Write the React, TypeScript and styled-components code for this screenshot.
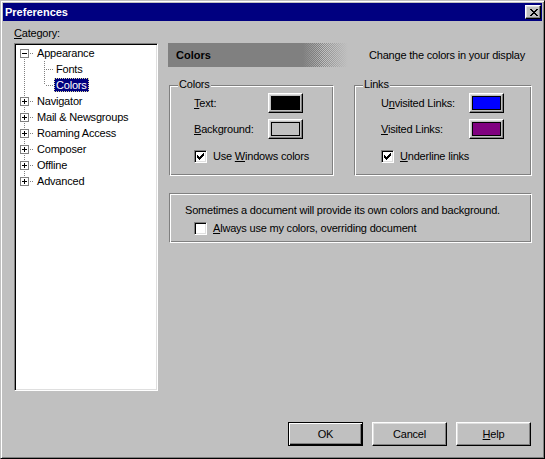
import React from "react";
import styled, { createGlobalStyle, css } from "styled-components";

const GlobalStyle = createGlobalStyle`
  html, body { margin: 0; padding: 0; background: #c0c0c0; }
  body {
    font-family: "Liberation Sans", Arial, sans-serif;
    font-size: 11px;
    letter-spacing: -0.2px;
    color: #000;
  }
  * { box-sizing: border-box; }
  u { text-decoration-thickness: 1px; text-underline-offset: 1px; }
`;

/* ---------- pixel glyph helper (icons) ---------- */
const gridPath = (rows: string[]) =>
  rows
    .map((r, y) => {
      let d = "";
      let x = 0;
      while (x < r.length) {
        if (r[x] === "#") {
          const s = x;
          while (x < r.length && r[x] === "#") x++;
          d += `M${s} ${y}h${x - s}v1h${-(x - s)}z`;
        } else x++;
      }
      return d;
    })
    .join("");

const CHECK = ["......#", ".....##", "#...###", "##.###.", "#####..", ".###...", "..#...."];
const CLOSE_X = ["##....##", ".##..##.", "..####..", "...##...", "..####..", ".##..##.", "##....##"];

const PixelGlyph: React.FC<{ rows: string[] }> = ({ rows }) => (
  <svg width={rows[0].length} height={rows.length} shapeRendering="crispEdges" style={{ display: "block" }}>
    <path d={gridPath(rows)} fill="#000" />
  </svg>
);

/* ---------- window chrome ---------- */
const Window = styled.div`
  width: 545px;
  height: 459px;
  background: #c0c0c0;
  border: 1px solid;
  border-color: #c0c0c0 #000 #000 #c0c0c0;
  box-shadow: inset 1px 1px #fff, inset -1px -1px #808080;
  padding: 2px;
  display: flex;
  flex-direction: column;
`;

const TitleBar = styled.div`
  height: 18px;
  background: #000080;
  display: flex;
  align-items: center;
  justify-content: space-between;
  padding: 0 1px 0 2px;
`;

const TitleText = styled.span`
  color: #fff;
  font-weight: bold;
  font-size: 11px;
  letter-spacing: 0;
`;

const CloseButton = styled.div`
  width: 16px;
  height: 14px;
  background: #c0c0c0;
  border: 1px solid;
  border-color: #fff #000 #000 #fff;
  box-shadow: inset -1px -1px #808080, inset 1px 1px #dfdfdf;
  display: flex;
  align-items: center;
  justify-content: center;
  padding-left: 1px;
`;

const Body = styled.div`
  flex: 1;
  display: flex;
  flex-direction: column;
  padding: 5px 10px 0 11px;
`;

const Main = styled.div`
  display: flex;
  gap: 10px;
`;

const LeftCol = styled.div`
  width: 144px;
  display: flex;
  flex-direction: column;
`;

const FieldLabel = styled.div`
  height: 14px;
  line-height: 14px;
  margin-bottom: 3px;
`;

/* ---------- tree ---------- */
const TreeBox = styled.div`
  height: 348px;
  background: #fff;
  border: 1px solid;
  border-color: #808080 #fff #fff #808080;
  box-shadow: inset 1px 1px #000, inset -1px -1px #dfdfdf;
  padding: 1px;
`;

const TreeRow = styled.div`
  height: 16px;
  display: flex;
  align-items: center;
`;

const TreeLabel = styled.span<{ $selected?: boolean }>`
  height: 14px;
  line-height: 14px;
  padding: 0 2px;
  white-space: nowrap;
  ${(p) =>
    p.$selected &&
    css`
      background: #000080;
      color: #fff;
      outline: 1px dotted #e0e0a0;
      outline-offset: -1px;
    `}
`;

type Node = {
  label: string;
  level: 0 | 1;
  box?: "minus" | "plus";
  up?: boolean;
  down?: boolean;
  through?: boolean;
  selected?: boolean;
};

const NODES: Node[] = [
  { label: "Appearance", level: 0, box: "minus", down: true },
  { label: "Fonts", level: 1, up: true, down: true, through: true },
  { label: "Colors", level: 1, up: true, through: true, selected: true },
  { label: "Navigator", level: 0, box: "plus", up: true, down: true },
  { label: "Mail & Newsgroups", level: 0, box: "plus", up: true, down: true },
  { label: "Roaming Access", level: 0, box: "plus", up: true, down: true },
  { label: "Composer", level: 0, box: "plus", up: true, down: true },
  { label: "Offline", level: 0, box: "plus", up: true, down: true },
  { label: "Advanced", level: 0, box: "plus", up: true },
];

const Gutter: React.FC<{ node: Node }> = ({ node }) => {
  const w = 19 + 19 * node.level;
  const lx = 8 + 20 * node.level + 0.5;
  const dash = { stroke: "#808080", strokeWidth: 1, strokeDasharray: "1 1" };
  return (
    <svg width={w} height={16} shapeRendering="crispEdges" style={{ display: "block", flex: "none" }}>
      {node.through && <line x1={8.5} y1={0} x2={8.5} y2={16} {...dash} />}
      {node.up && <line x1={lx} y1={0} x2={lx} y2={8} {...dash} />}
      {node.down && <line x1={lx} y1={8} x2={lx} y2={16} {...dash} />}
      <line x1={lx + 1} y1={8.5} x2={w - 1} y2={8.5} {...dash} />
      {node.box && (
        <g>
          <rect x={4.5} y={4.5} width={8} height={8} fill="#fff" stroke="#808080" />
          <line x1={6} y1={8.5} x2={11} y2={8.5} stroke="#000" />
          {node.box === "plus" && <line x1={8.5} y1={6} x2={8.5} y2={11} stroke="#000" />}
        </g>
      )}
    </svg>
  );
};

/* ---------- right panel ---------- */
const RightCol = styled.div`
  flex: 1;
  padding-top: 17px;
  display: flex;
  flex-direction: column;
`;

const PanelHeader = styled.div`
  height: 24px;
  display: flex;
  align-items: center;
`;

const HeaderBar = styled.div`
  width: 180px;
  height: 24px;
  display: flex;
`;

const HeaderTitle = styled.div`
  width: 135px;
  background: #808080;
  font-weight: bold;
  letter-spacing: 0;
  line-height: 24px;
  padding-left: 8px;
`;

const HeaderFade = styled.div`
  flex: 1;
  background:
    linear-gradient(to right, #808080, rgba(128, 128, 128, 0) 45%),
    repeating-conic-gradient(#808080 0% 25%, transparent 0% 50%) 0 0 / 2px 2px;
  -webkit-mask-image: linear-gradient(to right, #000 35%, transparent);
  mask-image: linear-gradient(to right, #000 35%, transparent);
`;

const HeaderNote = styled.div`
  margin-left: 21px;
  white-space: nowrap;
`;

const GroupRow = styled.div`
  display: flex;
  gap: 20px;
  margin: 18px 0 0 1px;
`;

const GroupBox = styled.div<{ $width: number; $height: number }>`
  position: relative;
  width: ${(p) => p.$width}px;
  height: ${(p) => p.$height}px;
  border: 1px solid;
  border-color: #808080 #fff #fff #808080;
  box-shadow: inset 1px 1px #fff, inset -1px -1px #808080;
`;

const Legend = styled.span`
  position: absolute;
  top: -8px;
  left: 8px;
  padding: 0 1px;
  line-height: 13px;
  background: #c0c0c0;
`;

const GroupGrid = styled.div<{ $pad: number; $labelWidth: number }>`
  display: grid;
  grid-template-columns: ${(p) => p.$labelWidth}px 35px;
  row-gap: 6px;
  align-items: center;
  padding: 7px 0 0 ${(p) => p.$pad}px;
`;

const RowLabel = styled.span`
  white-space: nowrap;
`;

const ColorButton = styled.div`
  width: 35px;
  height: 20px;
  background: #c0c0c0;
  border: 1px solid;
  border-color: #fff #000 #000 #fff;
  box-shadow: inset -1px -1px #808080, inset 1px 1px #dfdfdf;
  display: flex;
  align-items: center;
  justify-content: center;
`;

const Swatch = styled.div<{ $color: string }>`
  width: 29px;
  height: 14px;
  border: 1px solid #000;
  background: ${(p) => p.$color};
  margin: -1px 0 0 -1px;
`;

const CheckRow = styled.label<{ $span?: boolean; $indent?: number }>`
  display: flex;
  align-items: center;
  gap: 6px;
  height: 16px;
  white-space: nowrap;
  ${(p) => p.$span && css`grid-column: 1 / -1; margin-top: 3px;`}
  ${(p) => p.$indent !== undefined && css`margin-left: ${p.$indent}px;`}
`;

const CheckBox = styled.span`
  width: 13px;
  height: 13px;
  flex: none;
  background: #fff;
  border: 1px solid;
  border-color: #808080 #fff #fff #808080;
  box-shadow: inset 1px 1px #000, inset -1px -1px #dfdfdf;
  display: flex;
  align-items: center;
  justify-content: center;
`;

const WideBox = styled(GroupBox)`
  margin: 17px 0 0 1px;
  padding: 9px 0 0 15px;
`;

const Note = styled.div`
  line-height: 14px;
  white-space: nowrap;
  margin-bottom: 3px;
`;

/* ---------- footer ---------- */
const Footer = styled.div`
  display: flex;
  justify-content: flex-end;
  gap: 9px;
  margin-top: 31px;
  padding-right: 1px;
`;

const PushButton = styled.button<{ $default?: boolean }>`
  width: 75px;
  height: 24px;
  padding: 0;
  font: inherit;
  letter-spacing: inherit;
  color: #000;
  background: #c0c0c0;
  border: 1px solid;
  ${(p) =>
    p.$default
      ? css`
          border-color: #000;
          box-shadow: inset 1px 1px #fff, inset -1px -1px #000, inset -2px -2px #808080;
        `
      : css`
          border-color: #fff #000 #000 #fff;
          box-shadow: inset -1px -1px #808080, inset 1px 1px #dfdfdf;
        `}
`;

const Check: React.FC<{ checked?: boolean }> = ({ checked }) => (
  <CheckBox>{checked && <PixelGlyph rows={CHECK} />}</CheckBox>
);

export default function App() {
  return (
    <>
      <GlobalStyle />
      <Window>
        <TitleBar>
          <TitleText>Preferences</TitleText>
          <CloseButton aria-label="Close">
            <PixelGlyph rows={CLOSE_X} />
          </CloseButton>
        </TitleBar>
        <Body>
          <Main>
            <LeftCol>
              <FieldLabel>
                <u>C</u>ategory:
              </FieldLabel>
              <TreeBox>
                {NODES.map((n) => (
                  <TreeRow key={n.label}>
                    <Gutter node={n} />
                    <TreeLabel $selected={n.selected}>{n.label}</TreeLabel>
                  </TreeRow>
                ))}
              </TreeBox>
            </LeftCol>
            <RightCol>
              <PanelHeader>
                <HeaderBar>
                  <HeaderTitle>Colors</HeaderTitle>
                  <HeaderFade />
                </HeaderBar>
                <HeaderNote>Change the colors in your display</HeaderNote>
              </PanelHeader>
              <GroupRow>
                <GroupBox $width={165} $height={91}>
                  <Legend>Colors</Legend>
                  <GroupGrid $pad={24} $labelWidth={74}>
                    <RowLabel>
                      <u>T</u>ext:
                    </RowLabel>
                    <ColorButton>
                      <Swatch $color="#000" />
                    </ColorButton>
                    <RowLabel>
                      <u>B</u>ackground:
                    </RowLabel>
                    <ColorButton>
                      <Swatch $color="#c0c0c0" />
                    </ColorButton>
                    <CheckRow $span>
                      <Check checked />
                      <span>
                        Use <u>W</u>indows colors
                      </span>
                    </CheckRow>
                  </GroupGrid>
                </GroupBox>
                <GroupBox $width={178} $height={91}>
                  <Legend>Links</Legend>
                  <GroupGrid $pad={26} $labelWidth={88}>
                    <RowLabel>
                      U<u>n</u>visited Links:
                    </RowLabel>
                    <ColorButton>
                      <Swatch $color="#0000ff" />
                    </ColorButton>
                    <RowLabel>
                      <u>V</u>isited Links:
                    </RowLabel>
                    <ColorButton>
                      <Swatch $color="#800080" />
                    </ColorButton>
                    <CheckRow $span>
                      <Check checked />
                      <span>
                        <u>U</u>nderline links
                      </span>
                    </CheckRow>
                  </GroupGrid>
                </GroupBox>
              </GroupRow>
              <WideBox $width={363} $height={50}>
                <Note>Sometimes a document will provide its own colors and background.</Note>
                <CheckRow $indent={9}>
                  <Check />
                  <span>
                    <u>A</u>lways use my colors, overriding document
                  </span>
                </CheckRow>
              </WideBox>
            </RightCol>
          </Main>
          <Footer>
            <PushButton $default>OK</PushButton>
            <PushButton>Cancel</PushButton>
            <PushButton>
              <u>H</u>elp
            </PushButton>
          </Footer>
        </Body>
      </Window>
    </>
  );
}
